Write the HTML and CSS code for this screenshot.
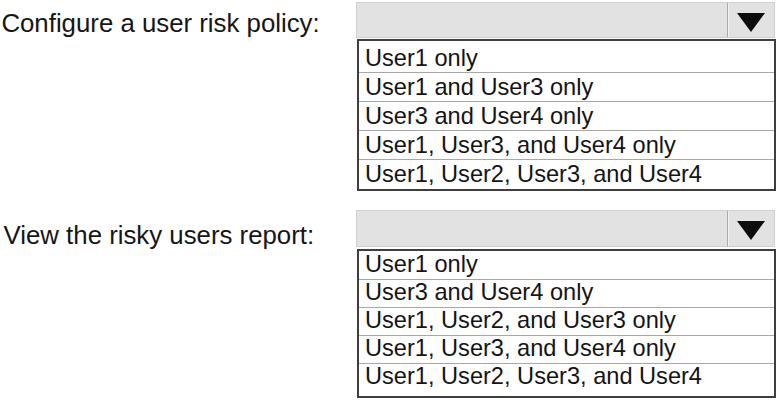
FILE: index.html
```html
<!DOCTYPE html>
<html lang="en">
<head>
<meta charset="utf-8">
<title>User risk policy</title>
<link rel="stylesheet" href="styles.css">
</head>
<body>
<div class="q q1">
  <div class="label">Configure a user risk policy:</div>
  <div class="dd">
    <div class="dd-head">
      <div class="dd-field"></div>
      <div class="dd-btn"><svg width="28" height="19" viewBox="0 0 28 19"><polygon points="0,0 28,0 14,19" fill="#0d0d0d"/></svg></div>
    </div>
    <ul class="dd-list">
      <li>User1 only</li>
      <li>User1 and User3 only</li>
      <li>User3 and User4 only</li>
      <li>User1, User3, and User4 only</li>
      <li>User1, User2, User3, and User4</li>
    </ul>
  </div>
</div>
<div class="q q2">
  <div class="label">View the risky users report:</div>
  <div class="dd">
    <div class="dd-head">
      <div class="dd-field"></div>
      <div class="dd-btn"><svg width="28" height="19" viewBox="0 0 28 19"><polygon points="0,0 28,0 14,19" fill="#0d0d0d"/></svg></div>
    </div>
    <ul class="dd-list">
      <li>User1 only</li>
      <li>User3 and User4 only</li>
      <li>User1, User2, and User3 only</li>
      <li>User1, User3, and User4 only</li>
      <li>User1, User2, User3, and User4</li>
    </ul>
  </div>
</div>
</body>
</html>
```

FILE: styles.css
```css
html, body {
  margin: 0;
  padding: 0;
  background: #ffffff;
}

body {
  font-family: "Liberation Sans", Arial, sans-serif;
  color: #161616;
  overflow: hidden;
}

.q {
  display: flex;
  align-items: flex-start;
}

.q1 {
  padding-top: 2px;
}

.q2 {
  margin-top: 19px;
}

.label {
  flex: none;
  width: 356px;
  box-sizing: border-box;
  font-size: 25.8px;
  line-height: 30px;
  white-space: nowrap;
}

.q1 .label {
  padding: 5.5px 0 0 1.4px;
}

.q2 .label {
  padding: 10.4px 0 0 3.5px;
}

.dd {
  flex: none;
  width: 420px;
}

.dd-head {
  display: flex;
  height: 36px;
  margin-right: 1px;
  box-sizing: border-box;
  background: #e2e2e2;
  border: 1px solid #d0d0d0;
}

.q2 .dd-head {
  height: 37px;
}

.dd-field {
  flex: 1;
}

.dd-btn {
  width: 47px;
  box-sizing: border-box;
  border-left: 1px solid #a9a9a9;
  box-shadow: inset 1px 0 #f3f3f3;
  display: flex;
  justify-content: center;
  align-items: flex-start;
  padding-top: 10px;
}

.dd-btn svg {
  display: block;
}

.dd-list {
  list-style: none;
  margin: 1px 0 0 1px;
  padding: 3px 0 1px;
  border: 2px solid #3e3e3e;
  font-size: 23.6px;
  color: #141414;
}

.dd-list li {
  height: 27px;
  line-height: 27px;
  padding: 1px 0 0 6px;
  border-bottom: 1px solid #a8a8a8;
  white-space: nowrap;
}

.dd-list li:last-child {
  border-bottom: none;
}

.q2 .dd-list {
  margin-top: 2px;
  padding: 1px 0 5px;
}

.q2 .dd-list li {
  height: 24px;
  line-height: 24px;
  padding: 0 0 3px 6px;
}
```
